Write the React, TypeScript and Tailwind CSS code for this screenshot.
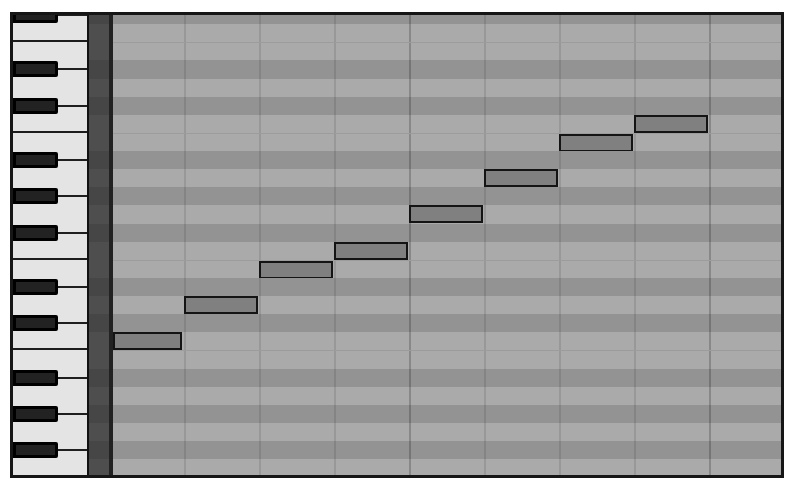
import React from "react";

const FIRST_MIDI = 78; // F#5 at the top, partly hidden
const ROW_COUNT = 26;
const BLACK_PCS = [1, 3, 6, 8, 10];

// column widths of the grid (px); beat lines sit on the left edge of every column but the first
const COLUMNS = [71, 75, 75, 75, 75, 75, 75, 75, 72];
const BAR_COLUMNS = [4, 8];

// C major scale, one note per beat
const NOTES: Record<number, number> = {
  60: 0,
  62: 1,
  64: 2,
  65: 3,
  67: 4,
  69: 5,
  71: 6,
  72: 7,
};

function KeyCell({ midi }: { midi: number }) {
  const pc = midi % 12;
  if (BLACK_PCS.includes(pc)) {
    return (
      <div className="flex w-[74px] shrink-0 items-center bg-[#e4e4e4]">
        <div className="h-[16px] w-[45px] shrink-0 rounded-r-[2px] border-[3px] border-black bg-[#222222]" />
        <div className="h-[2px] flex-1 bg-[#1f1f1f]" />
      </div>
    );
  }
  const fullLine = pc === 5 || pc === 0;
  return (
    <div
      className={
        fullLine
          ? "w-[74px] shrink-0 border-b-2 border-[#1c1c1c] bg-[#e4e4e4]"
          : "w-[74px] shrink-0 bg-[#e4e4e4]"
      }
    />
  );
}

function Row({ midi }: { midi: number }) {
  const pc = midi % 12;
  const black = BLACK_PCS.includes(pc);
  const noteCol = NOTES[midi];
  const seam = pc === 4 || pc === 11;

  return (
    <div className="flex h-[18.14px] shrink-0">
      <KeyCell midi={midi} />
      <div
        className={
          black
            ? "w-[26px] shrink-0 border-l-2 border-r-4 border-l-[#111111] border-r-[#222222] bg-[#464646]"
            : "w-[26px] shrink-0 border-l-2 border-r-4 border-l-[#111111] border-r-[#222222] bg-[#4e4e4e]"
        }
      />
      <div
        className={
          black
            ? "flex flex-1 bg-[#939393]"
            : seam
              ? "flex flex-1 border-t border-[#9c9c9c] bg-[#aaaaaa]"
              : "flex flex-1 bg-[#aaaaaa]"
        }
      >
        {COLUMNS.map((w, i) => (
          <div
            key={i}
            style={{ width: w }}
            className={
              i === 0
                ? "h-full shrink-0"
                : BAR_COLUMNS.includes(i)
                  ? "h-full shrink-0 border-l-2 border-black/20"
                  : "h-full shrink-0 border-l-2 border-black/10"
            }
          >
            {noteCol === i &&
              (i === 0 ? (
                <div className="h-[18px] w-[69px] border-2 border-[#141414] bg-[#808080]" />
              ) : (
                <div className="-ml-[2px] h-[18px] w-[74px] border-2 border-[#141414] bg-[#808080]" />
              ))}
          </div>
        ))}
      </div>
    </div>
  );
}

export default function App() {
  const rows = Array.from({ length: ROW_COUNT }, (_, i) => FIRST_MIDI - i);

  return (
    <div className="h-[490px] w-[792px] bg-white pl-[10px] pt-[12px]">
      <div className="h-[466px] w-[774px] overflow-hidden border-[3px] border-[#161616]">
        <div className="-mt-[9px] flex flex-col">
          {rows.map((m) => (
            <Row key={m} midi={m} />
          ))}
        </div>
      </div>
    </div>
  );
}
